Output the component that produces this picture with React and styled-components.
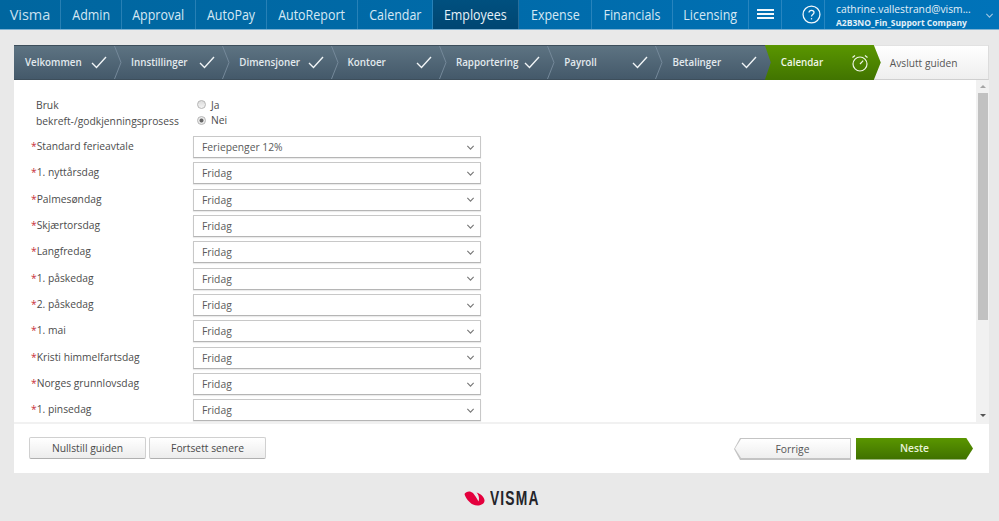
import React from 'react';
import styled, { createGlobalStyle } from 'styled-components';

const GlobalStyle = createGlobalStyle`
  html, body {
    margin: 0;
    height: 521px;
    overflow: hidden;
    background: #e9e9e9;
    font-family: "Open Sans", "Liberation Sans", sans-serif;
    color: #4a4a4a;
  }
  * { box-sizing: border-box; }
`;

const Page = styled.div`
  width: 999px;
  height: 521px;
  display: flex;
  flex-direction: column;
`;

const TopNav = styled.nav`
  height: 30px;
  display: flex;
  background: linear-gradient(90deg, #00669f 0%, #006aa8 45%, #0073b9 100%);
  border-bottom: 1px solid #7fb2d3;
  color: #d5e8f4;
  font-size: 14px;
`;

const NavItem = styled.div`
  width: ${p => p.$w}px;
  flex: none;
  display: flex;
  align-items: center;
  justify-content: center;
  padding-bottom: 1px;
  border-right: 1px solid rgba(130, 185, 225, 0.3);
  background: ${p => (p.$active ? 'linear-gradient(#00507f, #004672)' : 'transparent')};
  color: ${p => (p.$active ? '#e6f1f8' : 'inherit')};
`;

const NavLabel = styled.span`
  transform: scaleX(0.89);
  white-space: nowrap;
`;

const Brand = styled(NavItem)`
  color: #c9e0ef;
  font-size: 14.5px;
`;

const HelpBox = styled.div`
  width: 43px;
  flex: none;
  display: flex;
  align-items: center;
  justify-content: flex-end;
  padding-right: 3px;
  border-right: 1px solid rgba(130, 185, 225, 0.3);
`;

const UserBox = styled.div`
  flex: 1;
  padding: 1px 0 0 11px;
  display: flex;
  align-items: center;
  justify-content: space-between;
`;

const UserMail = styled.div`
  font-size: 10.3px;
  line-height: 14px;
  color: #e4f0f8;
  white-space: nowrap;
`;

const UserCompany = styled.div`
  font-size: 8.5px;
  font-weight: 700;
  line-height: 13px;
  color: #e4f0f8;
  white-space: nowrap;
`;

const UserArrow = styled.span`
  margin-right: 5px;
  line-height: 0;
`;

const Main = styled.main`
  margin: 15px 10px 0 14px;
  height: 428px;
  background: #fff;
  display: flex;
  flex-direction: column;
`;

const Wizard = styled.div`
  height: 35px;
  display: flex;
  flex: none;
  background: #fff;
  font-size: 9.8px;
  font-weight: 600;
`;

const Step = styled.div`
  width: ${p => (p.$first ? '101px' : '108.3px')};
  flex: none;
  position: relative;
  display: flex;
  align-items: center;
  justify-content: space-between;
  padding: 0 8px 0 ${p => (p.$first ? '11px' : '16px')};
  color: #e3eaee;
  background: linear-gradient(#5d7382, #44596a);
  border-top: 1px solid #3d4e5b;
  border-bottom: 1px solid #3d4e5b;
`;

const StepEdge = styled.svg`
  position: absolute;
  right: -7px;
  top: 0;
  width: 8px;
  height: 33px;
  z-index: 1;
`;

const ActiveStep = styled.div`
  width: 116px;
  flex: none;
  margin-right: -8px;
  position: relative;
  z-index: 1;
  display: flex;
  align-items: center;
  justify-content: space-between;
  padding: 0 12px 0 16px;
  color: #f0f6e8;
  background: linear-gradient(#5a9600, #417400);
  clip-path: polygon(0 0, calc(100% - 7px) 0, 100% 50%, calc(100% - 7px) 100%, 0 100%, 6px 50%);
`;

// sits behind the notch on the left of the green step
const NotchBack = styled.div`
  width: 0;
  flex: none;
  position: relative;
  &::before {
    content: '';
    position: absolute;
    left: 0;
    top: 0;
    width: 7px;
    height: 35px;
    background: linear-gradient(#5d7382, #44596a);
  }
`;

const FinishStep = styled.div`
  flex: 1;
  display: flex;
  align-items: center;
  padding-left: 17px;
  color: #565656;
  font-weight: 400;
  font-size: 10.2px;
  background: linear-gradient(#fff, #eeeeee);
  border-top: 1px solid #e2e2e2;
  border-right: 1px solid #dcdcdc;
  border-bottom: 1px solid #cfcfcf;
`;

const Content = styled.section`
  height: 342px;
  flex: none;
  display: flex;
  overflow: hidden;
`;

const FormArea = styled.div`
  flex: 1;
  padding: 18px 0 0 17px;
  font-size: 10.3px;
  color: #4c4c4c;
`;

const RadioRow = styled.div`
  display: flex;
  height: 38px;
`;

const RadioLabel = styled.div`
  width: 166px;
  padding-left: 5px;
  line-height: 15.5px;
`;

const RadioGroup = styled.div`
  display: flex;
  flex-direction: column;
  margin-top: -1px;
`;

const RadioOption = styled.div`
  display: flex;
  align-items: center;
  gap: 5px;
  height: 15.5px;
`;

const RadioDot = styled.span`
  width: 9px;
  height: 9px;
  border-radius: 50%;
  border: 1px solid #b5b5b5;
  background: ${p => (p.$on ? 'radial-gradient(circle, #666 0 1.6px, #ececec 2.4px)' : 'linear-gradient(#dcdcdc, #f4f4f4)')};
`;

const FieldRow = styled.div`
  display: flex;
  align-items: center;
  height: 22px;
  margin-bottom: 4.35px;
`;

const FieldLabel = styled.label`
  width: 162px;
  padding-bottom: 2px;
`;

const Star = styled.span`
  color: #c8313b;
`;

const SelectBox = styled.div`
  width: 288px;
  height: 22px;
  display: flex;
  align-items: center;
  justify-content: space-between;
  padding: 0 5px 0 8px;
  background: #fff;
  border: 1px solid #c8c8c8;
  border-bottom-color: #b5b5b5;
  box-shadow: 0 1px 1px rgba(0, 0, 0, 0.08);
  color: #5a5a5a;
`;

const ScrollTrack = styled.div`
  width: 13px;
  flex: none;
  display: flex;
  flex-direction: column;
  align-items: center;
  background: #f1f1f1;
`;

const ScrollArrow = styled.div`
  height: 13px;
  flex: none;
  display: flex;
  align-items: center;
  justify-content: center;
  &::before {
    content: '';
    border-left: 3px solid transparent;
    border-right: 3px solid transparent;
    ${p => (p.$down ? 'border-top: 3px solid #555;' : 'border-bottom: 3px solid #a5a5a5;')}
  }
`;

const ScrollThumb = styled.div`
  width: 10px;
  height: 227px;
  flex: none;
  background: #c1c1c1;
`;

const ScrollRest = styled.div`
  flex: 1;
`;

const Footer = styled.footer`
  flex: 1;
  display: flex;
  align-items: flex-start;
  justify-content: space-between;
  padding: 13px 16px 0 15px;
  border-top: 2px solid #f1f1f1;
  font-size: 10.3px;
`;

const ButtonGroup = styled.div`
  display: flex;
  gap: 3px;
`;

const Button = styled.div`
  width: 117px;
  height: 22px;
  display: flex;
  align-items: center;
  justify-content: center;
  background: linear-gradient(#fff, #ececec);
  border: 1px solid #d0d0d0;
  border-bottom-color: #b0b0b0;
  border-radius: 2px;
  color: #4a4a4a;
`;

const ArrowGroup = styled.div`
  display: flex;
  align-items: center;
  gap: 5px;
  margin-top: 1px;
`;

const PrevShape = styled.div`
  width: 117px;
  height: 22px;
  padding: 1px 1px 2px 1px;
  background: #c4c4c4;
  clip-path: polygon(6px 0, 100% 0, 100% 100%, 6px 100%, 0 50%);
`;

const PrevInner = styled.div`
  height: 100%;
  display: flex;
  align-items: center;
  justify-content: center;
  background: linear-gradient(#fff, #eeeeee);
  clip-path: polygon(6px 0, 100% 0, 100% 100%, 6px 100%, 0 50%);
  color: #555;
`;

const NextButton = styled.div`
  width: 117px;
  height: 22px;
  margin-top: -1px;
  display: flex;
  align-items: center;
  justify-content: center;
  padding-bottom: 1px;
  font-weight: 600;
  color: #e8f3da;
  background: linear-gradient(#5a9600, #3f7000);
  clip-path: polygon(0 0, calc(100% - 7px) 0, 100% 50%, calc(100% - 7px) 100%, 0 100%);
`;

const LogoRow = styled.div`
  flex: 1;
  display: flex;
  gap: 5px;
  padding: 18px 0 0 464px;
`;

const LogoMark = styled.svg`
  width: 21px;
  height: 15px;
`;

const LogoText = styled.span`
  width: 48px;
  font-family: "Liberation Sans", Arial, sans-serif;
  font-weight: 700;
  font-size: 19.5px;
  line-height: 15px;
  letter-spacing: 1.6px;
  color: #24242a;
  transform: scaleX(0.71);
  transform-origin: left center;
`;

const navItems = [
  ['Admin', 61],
  ['Approval', 74],
  ['AutoPay', 71],
  ['AutoReport', 91],
  ['Calendar', 75],
  ['Employees', 86],
  ['Expense', 73],
  ['Financials', 81],
  ['Licensing', 76],
];

const steps = ['Velkommen', 'Innstillinger', 'Dimensjoner', 'Kontoer', 'Rapportering', 'Payroll', 'Betalinger'];

const fields = [
  ['Standard ferieavtale', 'Feriepenger 12%'],
  ['1. nyttårsdag', 'Fridag'],
  ['Palmesøndag', 'Fridag'],
  ['Skjærtorsdag', 'Fridag'],
  ['Langfredag', 'Fridag'],
  ['1. påskedag', 'Fridag'],
  ['2. påskedag', 'Fridag'],
  ['1. mai', 'Fridag'],
  ['Kristi himmelfartsdag', 'Fridag'],
  ['Norges grunnlovsdag', 'Fridag'],
  ['1. pinsedag', 'Fridag'],
];

const Check = () => (
  <svg width="16" height="13" viewBox="0 0 16 13" fill="none" stroke="#f1f5f7" strokeWidth="1.4">
    <path d="M1 7l4.5 4.5L15 1" />
  </svg>
);

const Chevron = ({ color = '#777', size = 9 }) => (
  <svg width={size} height={size} viewBox="0 0 10 10" fill="none" stroke={color} strokeWidth="1.2">
    <path d="M1.5 3.2L5 6.8l3.5-3.6" />
  </svg>
);

const Clock = () => (
  <svg width="18" height="18" viewBox="0 0 18 18" fill="none" stroke="#f0f6e8" strokeWidth="1.2">
    <circle cx="9" cy="10" r="7" />
    <path d="M9 10l3.2-3.4M1.5 3.5L4 1.5M16.5 3.5L14 1.5" />
  </svg>
);

export default function App() {
  return (
    <Page>
      <GlobalStyle />
      <TopNav>
        <Brand $w={61}>Visma</Brand>
        {navItems.map(([label, w]) => (
          <NavItem key={label} $w={w} $active={label === 'Employees'}>
            <NavLabel>{label}</NavLabel>
          </NavItem>
        ))}
        <NavItem $w={33}>
          <svg width="17" height="10" viewBox="0 0 17 10" fill="#f2f8fc">
            <rect width="17" height="2" />
            <rect y="4" width="17" height="2" />
            <rect y="8" width="17" height="2" />
          </svg>
        </NavItem>
        <HelpBox>
          <svg width="19" height="19" viewBox="0 0 18 18" fill="none" stroke="#f2f8fc" strokeWidth="1.2">
            <circle cx="9" cy="9" r="8" />
            <path d="M6.6 7.2C6.6 5.8 7.7 5 9 5s2.4.8 2.4 2.1c0 1.8-2.4 1.9-2.4 3.7" />
            <path d="M9 12.4v1.3" />
          </svg>
        </HelpBox>
        <UserBox>
          <div>
            <UserMail>cathrine.vallestrand@vism...</UserMail>
            <UserCompany>A2B3NO_Fin_Support Company</UserCompany>
          </div>
          <UserArrow>
            <Chevron color="#9cc6e2" />
          </UserArrow>
        </UserBox>
      </TopNav>

      <Main>
        <Wizard>
          {steps.map((label, i) => (
            <Step key={label} $first={i === 0}>
              <span>{label}</span>
              <Check />
              {i < steps.length - 1 && (
                <StepEdge viewBox="0 0 8 33" fill="none" stroke="#75899a" strokeWidth="1">
                  <path d="M0.5 0L7 16.5L0.5 33" />
                </StepEdge>
              )}
            </Step>
          ))}
          <NotchBack />
          <ActiveStep>
            <span>Calendar</span>
            <Clock />
          </ActiveStep>
          <FinishStep>Avslutt guiden</FinishStep>
        </Wizard>

        <Content>
          <FormArea>
            <RadioRow>
              <RadioLabel>Bruk<br />bekreft-/godkjenningsprosess</RadioLabel>
              <RadioGroup>
                <RadioOption><RadioDot />Ja</RadioOption>
                <RadioOption><RadioDot $on />Nei</RadioOption>
              </RadioGroup>
            </RadioRow>
            {fields.map(([label, value]) => (
              <FieldRow key={label}>
                <FieldLabel><Star>*</Star>{label}</FieldLabel>
                <SelectBox>
                  <span>{value}</span>
                  <Chevron />
                </SelectBox>
              </FieldRow>
            ))}
          </FormArea>
          <ScrollTrack>
            <ScrollArrow />
            <ScrollThumb />
            <ScrollRest />
            <ScrollArrow $down />
          </ScrollTrack>
        </Content>

        <Footer>
          <ButtonGroup>
            <Button>Nullstill guiden</Button>
            <Button>Fortsett senere</Button>
          </ButtonGroup>
          <ArrowGroup>
            <PrevShape><PrevInner>Forrige</PrevInner></PrevShape>
            <NextButton>Neste</NextButton>
          </ArrowGroup>
        </Footer>
      </Main>

      <LogoRow>
        <LogoMark viewBox="0 0 21 15" fill="#e4003d">
          <path d="M0.5 3C2 0 6.500 -0.500 9 2C11 4.500 13 7.500 14.500 10.500C15.500 7.500 15 4 12.500 1.500C16.500 2.500 21 6.500 20.500 10C20 14 13.500 15.800 9 13.500C5 11.500 1.500 7 0.500 3Z" />
        </LogoMark>
        <LogoText>VISMA</LogoText>
      </LogoRow>
    </Page>
  );
}
